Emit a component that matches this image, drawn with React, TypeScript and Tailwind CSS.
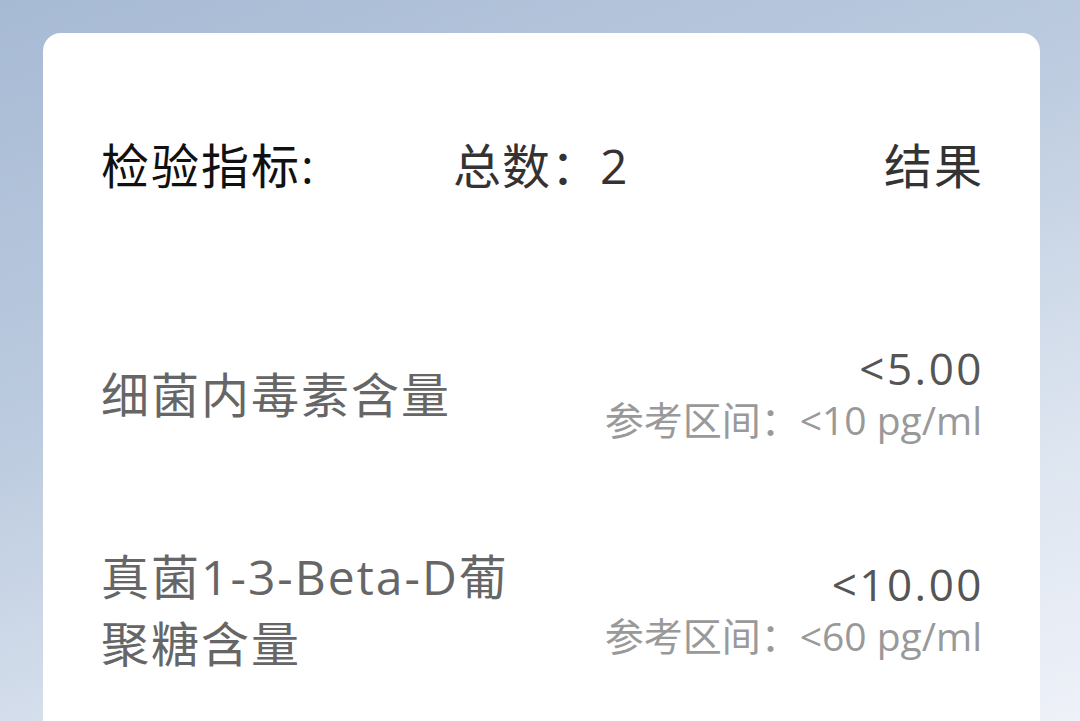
import React from "react";

const items = [
  { name: "细菌内毒素含量", value: "<5.00", range: "<10 pg/ml" },
  { name: "真菌1-3-Beta-D葡聚糖含量", value: "<10.00", range: "<60 pg/ml" },
];

export default function App() {
  return (
    <div
      className="h-[721px] w-full overflow-hidden bg-[linear-gradient(160deg,#a7bad4_0%,#bccbdf_40%,#dde5f0_75%,#eef1f8_100%)] pl-[43px] pr-[40px] pt-[33px]"
      style={{ fontFamily: '"Open Sans", "Noto Sans CJK SC", sans-serif' }}
    >
      <div className="h-[760px] rounded-t-[18px] bg-white pl-[58px] pr-[56px] pt-[99px]">
        {/* header */}
        <div className="flex items-center text-[48px] leading-[67px] tracking-[2px]">
          <div className="w-[352px] text-[#111111]">检验指标:</div>
          <div className="tracking-[1px] text-[#333333]">总数：2</div>
          <div className="flex-1" />
          <div className="text-[#333333]">结果</div>
        </div>

        {/* rows */}
        <div className="mt-[143px] flex flex-col gap-[97px]">
          {items.map((item) => (
            <div key={item.name} className="flex items-center justify-between">
              <div className="w-[440px] text-[48px] leading-[67px] tracking-[2px] text-[#666666]">
                {item.name}
              </div>
              <div className="flex flex-col items-end">
                <div className="text-[44px] leading-[52px] tracking-[2.5px] text-[#555555]">
                  {item.value}
                </div>
                <div className="pr-[2px] text-[39px] leading-[52px] text-[#999999]">
                  参考区间：{item.range}
                </div>
              </div>
            </div>
          ))}
        </div>
      </div>
    </div>
  );
}
